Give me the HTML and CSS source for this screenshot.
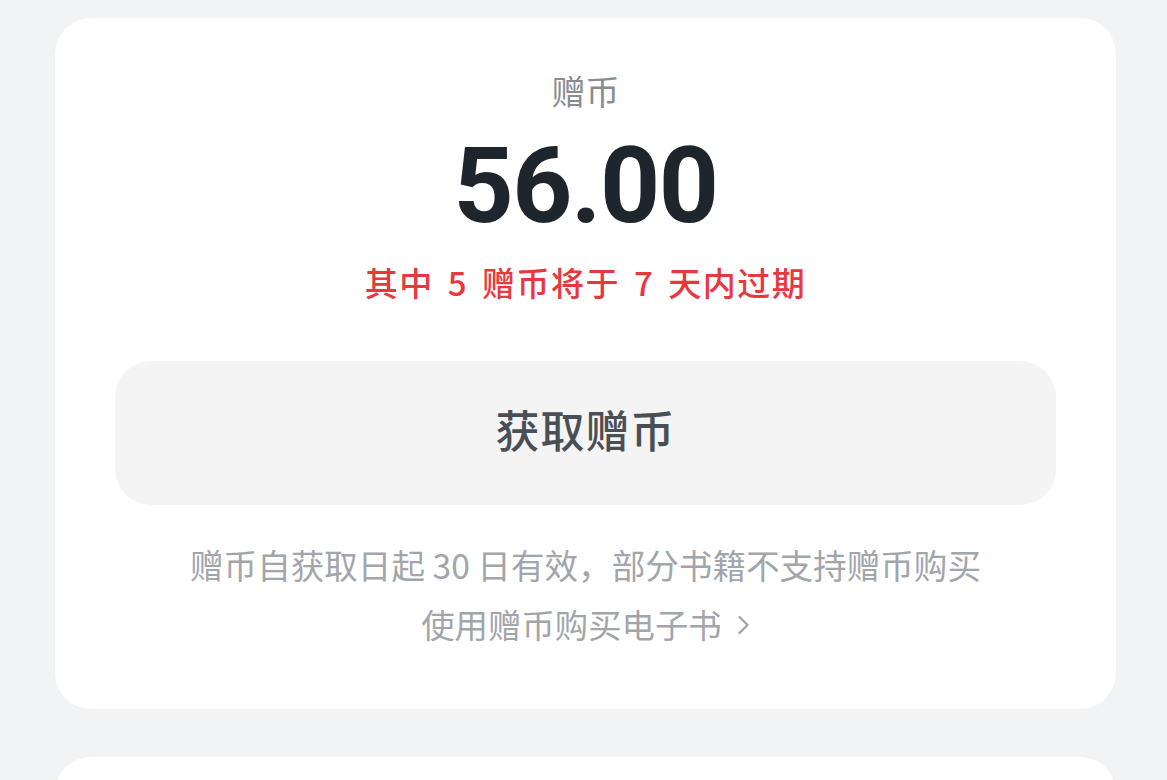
FILE: index.html
```html
<!DOCTYPE html>
<html lang="zh-CN">
<head>
<meta charset="utf-8">
<title>赠币</title>
<link rel="stylesheet" href="styles.css">
</head>
<body>
<main class="page">
  <section class="card balance">
    <div class="label">赠币</div>
    <div class="amount">56.00</div>
    <div class="expire">其中 5 赠币将于 7 天内过期</div>
    <button class="get-btn" type="button">获取赠币</button>
    <p class="note">赠币自获取日起 30 日有效，部分书籍不支持赠币购买</p>
    <a class="link" href="#">使用赠币购买电子书<svg class="chev" viewBox="0 0 13 20" width="13" height="20" aria-hidden="true"><path d="M2.5 2 L10.5 10 L2.5 18" fill="none" stroke="currentColor" stroke-width="2.4" stroke-linecap="round" stroke-linejoin="round"/></svg></a>
  </section>
  <section class="card next"></section>
</main>
</body>
</html>
```

FILE: styles.css
```css
html, body {
  margin: 0;
  padding: 0;
}
body {
  background: #f2f3f5;
  font-family: "Noto Sans CJK SC", "Noto Sans", sans-serif;
  width: 1167px;
  height: 780px;
  overflow: hidden;
}
.page {
  display: flex;
  flex-direction: column;
  gap: 48px;
  padding: 18px 51px 0 55px;
}
.card {
  background: #ffffff;
  border-radius: 36px;
}
.balance {
  box-sizing: border-box;
  display: flex;
  flex-direction: column;
  align-items: center;
  padding: 53px 60px 0;
  height: 691px;
}
.label {
  font-size: 34px;
  line-height: 40px;
  color: #898c92;
}
.amount {
  margin-top: 16px;
  font-family: Roboto, "Liberation Sans", sans-serif;
  font-weight: 700;
  font-size: 105px;
  line-height: 120px;
  color: #1f252c;
  letter-spacing: -1.5px;
}
.expire {
  margin-top: 15px;
  font-size: 33px;
  line-height: 40px;
  color: #e8383d;
  font-weight: 500;
  letter-spacing: 1.5px;
  word-spacing: 5px;
}
.get-btn {
  margin-top: 59px;
  width: 100%;
  height: 144px;
  border: 0;
  padding: 0 0 8px;
  border-radius: 36px;
  background: #f4f4f4;
  font-family: "Noto Sans CJK SC", "Noto Sans", sans-serif;
  font-size: 44px;
  font-weight: 500;
  color: #4a4f56;
  letter-spacing: 1px;
}
.note {
  margin: 40px 0 0;
  font-size: 33.6px;
  line-height: 40px;
  color: #a2a5aa;
}
.link {
  margin-top: 19px;
  font-size: 33.4px;
  line-height: 40px;
  color: #a2a5aa;
  text-decoration: none;
  display: flex;
  align-items: center;
  gap: 15px;
}
.chev {
  color: #a2a5aa;
  margin-top: 2px;
}
.next {
  height: 200px;
}
```
